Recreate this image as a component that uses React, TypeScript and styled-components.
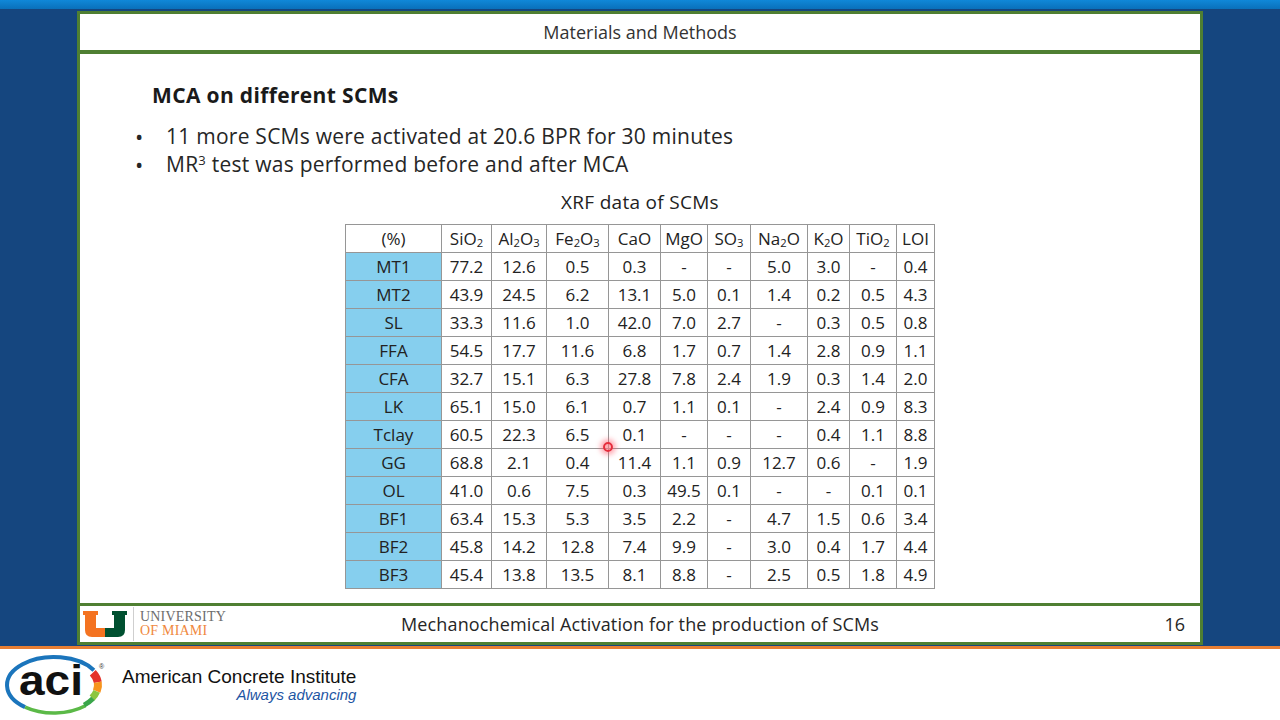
import styled, { createGlobalStyle } from 'styled-components';
import type { ReactNode } from 'react';

const GlobalStyle = createGlobalStyle`
  html, body {
    margin: 0;
    padding: 0;
    background: #fff;
  }
  body {
    width: 1280px;
    height: 720px;
    overflow: hidden;
    font-family: 'Open Sans', 'Liberation Sans', sans-serif;
  }
`;

const Page = styled.div`
  width: 1280px;
  height: 720px;
  display: flex;
  flex-direction: column;
  background: #fff;
`;

const TopBar = styled.div`
  height: 9px;
  background: linear-gradient(#1088d8, #0a70ba);
`;

const Stage = styled.div`
  height: 637px;
  box-sizing: border-box;
  padding: 2px 77px 0;
  background: #15467f;
`;

const Slide = styled.div`
  height: 634px;
  display: flex;
  flex-direction: column;
  background: #fff;
  border-left: 3px solid #4f7f32;
  border-right: 3px solid #4f7f32;
`;

const Header = styled.header`
  height: 36px;
  border-top: 3px solid #4f7f32;
  border-bottom: 4px solid #4f7f32;
  display: flex;
  align-items: center;
  justify-content: center;
  font-size: 18px;
  color: #333;
`;

const Content = styled.main`
  position: relative;
  flex: 1;
`;

const Title = styled.h2`
  margin: 27px 0 0 72px;
  font-size: 21px;
  line-height: 28px;
  letter-spacing: 0.35px;
  font-weight: 700;
  color: #1a1a1a;
`;

const Bullets = styled.ul`
  list-style: none;
  margin: 13px 0 0;
  padding: 0 0 0 55px;
`;

const Bullet = styled.li`
  display: flex;
  height: 28px;
  line-height: 28px;
  font-size: 21px;
  letter-spacing: 0.25px;
  color: #262626;
`;

const Marker = styled.span`
  width: 31px;
  font-size: 22px;
`;

const Sup = styled.sup`
  font-size: 0.62em;
  line-height: 0;
  vertical-align: 0.55em;
`;

const Caption = styled.div`
  margin-top: 12px;
  text-align: center;
  font-size: 19px;
  line-height: 24px;
  letter-spacing: 0.3px;
  color: #222;
`;

const TableWrap = styled.div`
  margin-top: 10px;
  display: flex;
  justify-content: center;
`;

const Table = styled.table`
  border-collapse: collapse;
  table-layout: fixed;
  width: 589px;
  font-size: 17px;
  color: #222;
`;

const Cell = styled.td<{ $label?: boolean }>`
  height: 27px;
  padding: 0;
  border: 1px solid #969696;
  text-align: center;
  line-height: 1;
  background: ${(p) => (p.$label ? '#86cfee' : '#fff')};
`;

const Sub = styled.sub`
  font-size: 0.66em;
  line-height: 0;
  vertical-align: -0.22em;
`;

const Laser = styled.div`
  position: absolute;
  left: 523px;
  top: 388px;
  width: 6px;
  height: 6px;
  border-radius: 50%;
  border: 2px solid #e62d3c;
  background: rgba(255, 120, 130, 0.6);
  box-shadow: 0 0 5px 3px rgba(255, 70, 90, 0.45);
`;

const Footer = styled.footer`
  height: 36px;
  border-top: 3px solid #4f7f32;
  border-bottom: 3px solid #4f7f32;
  display: grid;
  grid-template-columns: 1fr auto 1fr;
  align-items: center;
`;

const UmBrand = styled.div`
  display: flex;
  align-items: center;
  height: 100%;
  padding-left: 3px;
`;

const UmDivider = styled.div`
  width: 1px;
  height: 34px;
  margin: 0 6px 0 6px;
  background: #cfcfcf;
`;

const UmText = styled.div`
  display: flex;
  flex-direction: column;
  font-family: 'Liberation Serif', 'DejaVu Serif', serif;
  font-size: 14px;
  line-height: 14px;
  letter-spacing: 0.2px;
`;

const UmLine = styled.span<{ $orange?: boolean }>`
  color: ${(p) => (p.$orange ? '#f0883e' : '#6d6d6d')};
`;

const FooterTitle = styled.div`
  font-size: 18px;
  letter-spacing: 0.15px;
  color: #262626;
`;

const PageNum = styled.div`
  justify-self: end;
  padding-right: 15px;
  font-size: 18px;
  color: #262626;
`;

const OrangeLine = styled.div`
  height: 3px;
  background: #e87f34;
`;

const Bottom = styled.div`
  flex: 1;
  display: flex;
  align-items: flex-start;
  padding: 5px 0 0 4px;
`;

const AciName = styled.div`
  margin: 13px 0 0 16px;
  display: flex;
  flex-direction: column;
  align-items: flex-end;
  font-family: 'Liberation Sans', Arial, sans-serif;
`;

const AciTitle = styled.span`
  font-size: 19px;
  line-height: 20px;
  color: #111;
`;

const AciTagline = styled.span`
  font-size: 15px;
  line-height: 16px;
  font-style: italic;
  color: #1d55a3;
`;

const cols = [96, 50, 55, 62, 52, 47, 43, 57, 42, 47, 38];

const heads: ReactNode[] = [
  '(%)',
  <>SiO<Sub>2</Sub></>,
  <>Al<Sub>2</Sub>O<Sub>3</Sub></>,
  <>Fe<Sub>2</Sub>O<Sub>3</Sub></>,
  'CaO',
  'MgO',
  <>SO<Sub>3</Sub></>,
  <>Na<Sub>2</Sub>O</>,
  <>K<Sub>2</Sub>O</>,
  <>TiO<Sub>2</Sub></>,
  'LOI',
];

const rows: [string, string[]][] = [
  ['MT1', ['77.2', '12.6', '0.5', '0.3', '-', '-', '5.0', '3.0', '-', '0.4']],
  ['MT2', ['43.9', '24.5', '6.2', '13.1', '5.0', '0.1', '1.4', '0.2', '0.5', '4.3']],
  ['SL', ['33.3', '11.6', '1.0', '42.0', '7.0', '2.7', '-', '0.3', '0.5', '0.8']],
  ['FFA', ['54.5', '17.7', '11.6', '6.8', '1.7', '0.7', '1.4', '2.8', '0.9', '1.1']],
  ['CFA', ['32.7', '15.1', '6.3', '27.8', '7.8', '2.4', '1.9', '0.3', '1.4', '2.0']],
  ['LK', ['65.1', '15.0', '6.1', '0.7', '1.1', '0.1', '-', '2.4', '0.9', '8.3']],
  ['Tclay', ['60.5', '22.3', '6.5', '0.1', '-', '-', '-', '0.4', '1.1', '8.8']],
  ['GG', ['68.8', '2.1', '0.4', '11.4', '1.1', '0.9', '12.7', '0.6', '-', '1.9']],
  ['OL', ['41.0', '0.6', '7.5', '0.3', '49.5', '0.1', '-', '-', '0.1', '0.1']],
  ['BF1', ['63.4', '15.3', '5.3', '3.5', '2.2', '-', '4.7', '1.5', '0.6', '3.4']],
  ['BF2', ['45.8', '14.2', '12.8', '7.4', '9.9', '-', '3.0', '0.4', '1.7', '4.4']],
  ['BF3', ['45.4', '13.8', '13.5', '8.1', '8.8', '-', '2.5', '0.5', '1.8', '4.9']],
];

function UmLogo() {
  return (
    <svg width="44" height="26" viewBox="0 0 44 26">
      <path d="M0 0 H15 V4 H13 V17 H22 V26 H9 Q2 26 2 19 V4 H0 Z" fill="#f47321" />
      <path d="M29 0 H44 V4 H42 V19 Q42 26 35 26 H22 V17 H31 V4 H29 Z" fill="#005030" />
    </svg>
  );
}

// point on the logo ellipse
const pt = (deg: number, rx = 47, ry = 28) => {
  const a = (deg * Math.PI) / 180;
  return `${(50 + rx * Math.cos(a)).toFixed(1)} ${(31 + ry * Math.sin(a)).toFixed(1)}`;
};

const arc = (from: number, to: number, rx = 47, ry = 28) =>
  `M ${pt(from, rx, ry)} A ${rx} ${ry} 0 ${to - from > 180 ? 1 : 0} 1 ${pt(to, rx, ry)}`;

function AciLogo() {
  return (
    <svg width="102" height="62" viewBox="0 0 102 62">
      <path d={arc(128, 328)} fill="none" stroke="#1b75bc" strokeWidth="4" />
      <path d={arc(48, 128)} fill="none" stroke="#5bb947" strokeWidth="3.5" />
      <path d={arc(-28, -6, 44, 26)} fill="none" stroke="#e4322b" strokeWidth="8" />
      <path d={arc(-6, 14, 44, 26)} fill="none" stroke="#f7941d" strokeWidth="8" />
      <path d={arc(14, 30, 44, 26)} fill="none" stroke="#8cc63f" strokeWidth="7" />
      <path d={arc(30, 48, 45, 27)} fill="none" stroke="#3aa64a" strokeWidth="5" />
      <text
        x="47"
        y="41"
        fontFamily="'Liberation Sans', Arial, sans-serif"
        fontWeight="700"
        fontSize="42"
        textAnchor="middle"
        textLength="64"
        lengthAdjust="spacingAndGlyphs"
        fill="#111"
      >
        aci
      </text>
      <text x="95" y="15" fontFamily="'Liberation Sans', sans-serif" fontSize="7" fill="#333">
        ®
      </text>
    </svg>
  );
}

export default function App() {
  return (
    <Page>
      <GlobalStyle />
      <TopBar />
      <Stage>
        <Slide>
          <Header>Materials and Methods</Header>
          <Content>
            <Title>MCA on different SCMs</Title>
            <Bullets>
              <Bullet>
                <Marker>•</Marker>11 more SCMs were activated at 20.6 BPR for 30 minutes
              </Bullet>
              <Bullet>
                <Marker>•</Marker>
                <span>
                  MR<Sup>3</Sup> test was performed before and after MCA
                </span>
              </Bullet>
            </Bullets>
            <Caption>XRF data of SCMs</Caption>
            <TableWrap>
              <Table>
                <colgroup>
                  {cols.map((w, i) => (
                    <col key={i} style={{ width: w }} />
                  ))}
                </colgroup>
                <thead>
                  <tr>
                    {heads.map((h, i) => (
                      <Cell as="th" key={i} style={{ fontWeight: 400 }}>
                        {h}
                      </Cell>
                    ))}
                  </tr>
                </thead>
                <tbody>
                  {rows.map(([name, vals]) => (
                    <tr key={name}>
                      <Cell $label>{name}</Cell>
                      {vals.map((v, i) => (
                        <Cell key={i}>{v}</Cell>
                      ))}
                    </tr>
                  ))}
                </tbody>
              </Table>
            </TableWrap>
            <Laser />
          </Content>
          <Footer>
            <UmBrand>
              <UmLogo />
              <UmDivider />
              <UmText>
                <UmLine>UNIVERSITY</UmLine>
                <UmLine $orange>OF MIAMI</UmLine>
              </UmText>
            </UmBrand>
            <FooterTitle>Mechanochemical Activation for the production of SCMs</FooterTitle>
            <PageNum>16</PageNum>
          </Footer>
        </Slide>
      </Stage>
      <OrangeLine />
      <Bottom>
        <AciLogo />
        <AciName>
          <AciTitle>American Concrete Institute</AciTitle>
          <AciTagline>Always advancing</AciTagline>
        </AciName>
      </Bottom>
    </Page>
  );
}
